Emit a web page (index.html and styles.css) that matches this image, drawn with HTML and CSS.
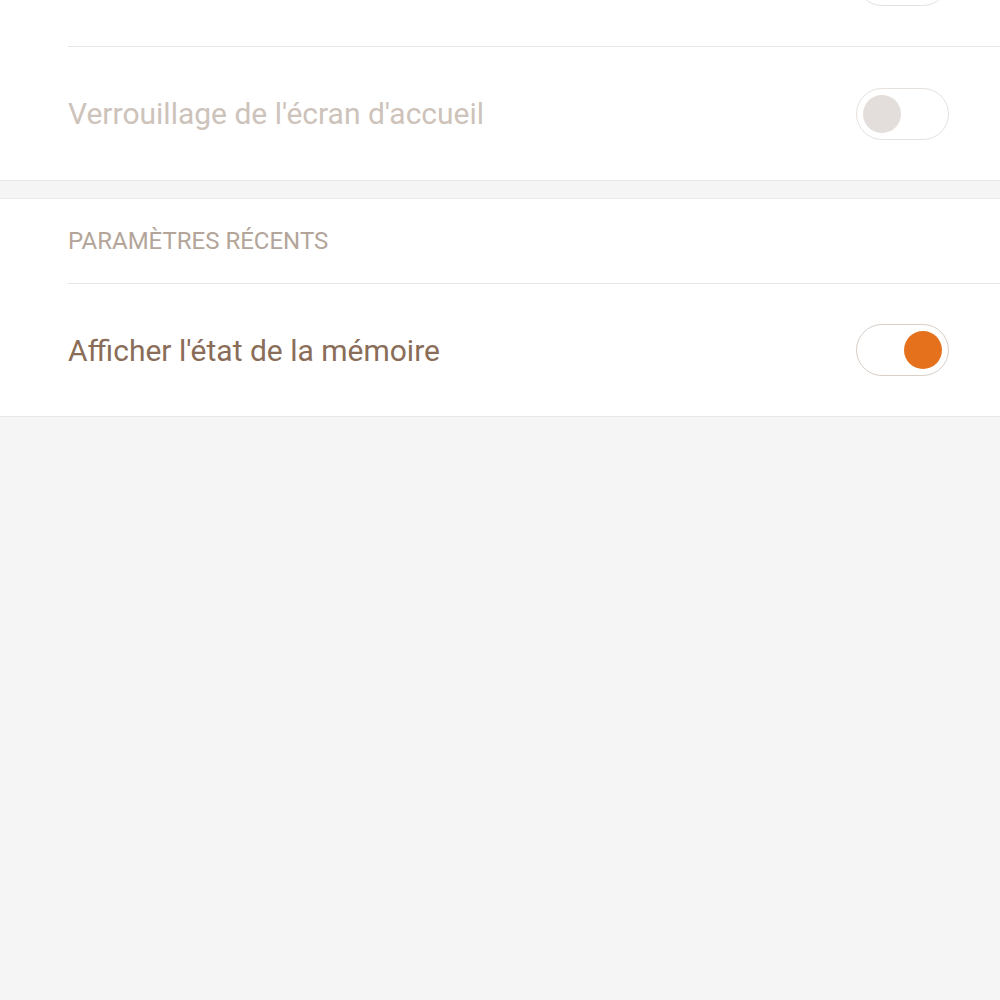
FILE: index.html
```html
<!DOCTYPE html>
<html lang="fr">
<head>
    <meta charset="UTF-8">
    <meta name="viewport" content="width=device-width, initial-scale=1.0">
    <title>Paramètres</title>
    <link rel="stylesheet" href="styles.css">
</head>
<body>
    <div class="group first">
        <div class="row">
            <span class="label"></span>
            <div class="toggle"><div class="knob"></div></div>
        </div>
        <div class="row last">
            <span class="label disabled">Verrouillage de l'écran d'accueil</span>
            <div class="toggle"><div class="knob"></div></div>
        </div>
    </div>
    <div class="group">
        <div class="title">PARAMÈTRES RÉCENTS</div>
        <div class="row last tall">
            <span class="label">Afficher l'état de la mémoire</span>
            <div class="toggle on"><div class="knob"></div></div>
        </div>
    </div>
</body>
</html>
```

FILE: styles.css
```css
body{
    margin: 0;
    background-color: #f5f5f5;
    font-family: Roboto, "Noto Sans", sans-serif;
}
.group{
    background-color: #fff;
    border-top: 1px solid #ebebeb;
    border-bottom: 1px solid #e8e8e8;
    margin-top: 17px;
}
.group.first{
    border-top: none;
    margin-top: -87px;
}
.row{
    height: 133px;
    margin-left: 68px;
    padding-right: 51px;
    border-bottom: 1px solid #e6e6e6;
    display: flex;
    align-items: center;
    justify-content: space-between;
}
.row.last{
    border-bottom: none;
}
.row.tall{
    height: 132px;
}
.label{
    font-size: 30px;
    color: #8a6d58;
}
.label.disabled{
    color: #cdc3ba;
}
.title{
    height: 84px;
    margin-left: 68px;
    border-bottom: 1px solid #e6e6e6;
    display: flex;
    align-items: center;
    font-size: 24px;
    color: #b3a599;
}
.toggle{
    width: 79px;
    height: 50px;
    border: 1px solid #e6e1dc;
    border-radius: 26px;
    display: flex;
    align-items: center;
    padding: 0 6px;
}
.toggle.on{
    border-color: #d8cfc7;
    justify-content: flex-end;
}
.knob{
    width: 38px;
    height: 38px;
    border-radius: 50%;
    background-color: #e3dedb;
}
.toggle.on .knob{
    background-color: #e5711d;
}
```
